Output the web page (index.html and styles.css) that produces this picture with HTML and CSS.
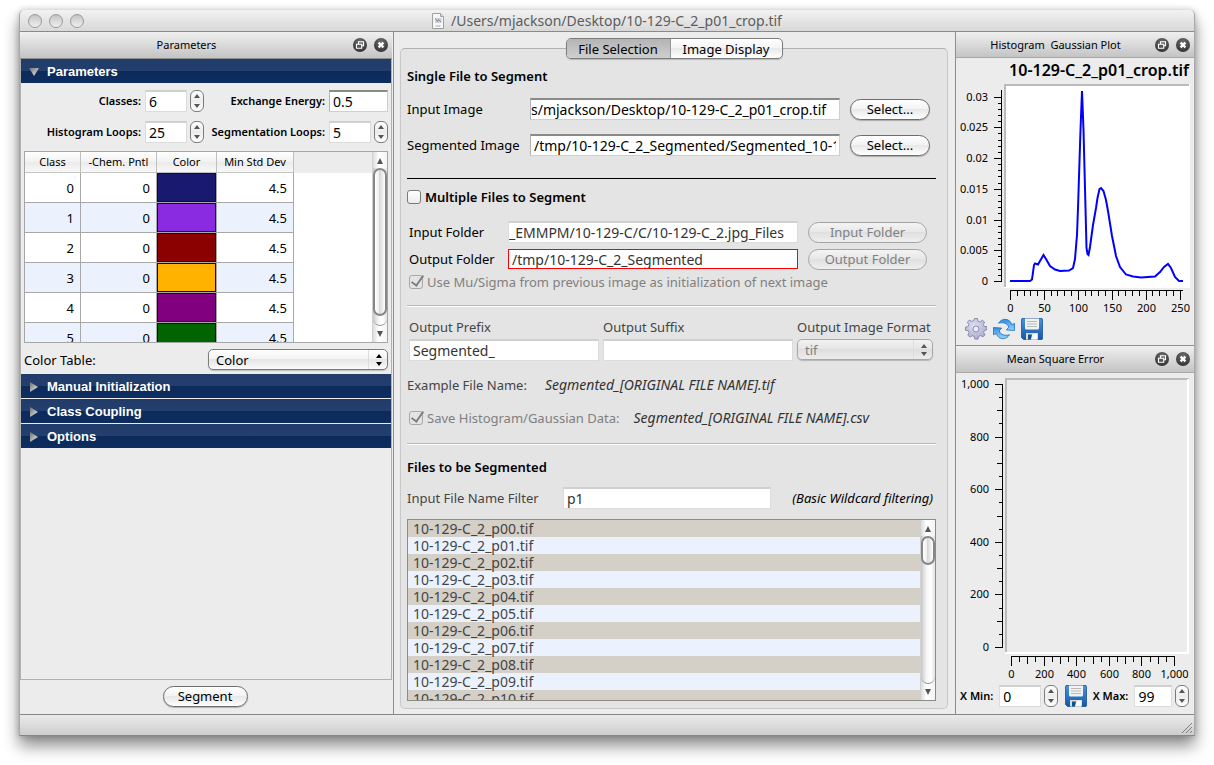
FILE: index.html
```html
<!DOCTYPE html>
<html lang="en">
<head>
<meta charset="utf-8">
<title>/Users/mjackson/Desktop/10-129-C_2_p01_crop.tif</title>
<link rel="stylesheet" href="styles.css">
</head>
<body>
<svg class="defs" width="0" height="0" aria-hidden="true">
  <defs>
    <radialGradient id="dark" cx="50%" cy="30%" r="75%"><stop offset="0" stop-color="#707070"/><stop offset="1" stop-color="#2e2e2e"/></radialGradient>
    <linearGradient id="arrow" x1="0" y1="0" x2="1" y2="1"><stop offset="0" stop-color="#6d6d6d"/><stop offset="1" stop-color="#f2f2f2"/></linearGradient>
    <linearGradient id="disk" x1="0" y1="0" x2="0" y2="1"><stop offset="0" stop-color="#4c94dc"/><stop offset="1" stop-color="#1257a8"/></linearGradient>
    <linearGradient id="sync" x1="0" y1="0" x2="0" y2="1"><stop offset="0" stop-color="#2f8ee4"/><stop offset="1" stop-color="#9ad4ff"/></linearGradient>
    <radialGradient id="cog" cx="40%" cy="35%" r="70%"><stop offset="0" stop-color="#dedff2"/><stop offset="1" stop-color="#a9abd0"/></radialGradient>
    <symbol id="i-float" viewBox="0 0 14 14"><circle cx="7" cy="7" r="7" fill="url(#dark)"/><path d="M5.5 6V3.8h5v4H9M3.5 6.2h5.2v4H3.5z" fill="none" stroke="#fff" stroke-width="1.1"/></symbol>
    <symbol id="i-close" viewBox="0 0 14 14"><circle cx="7" cy="7" r="7" fill="url(#dark)"/><path d="M4.6 4.6l4.8 4.8M9.4 4.6L4.6 9.4" stroke="#fff" stroke-width="2.3"/></symbol>
    <symbol id="i-disk" viewBox="0 0 22 22">
      <path d="M1 .5h20l.5.5v20l-.5.5H2.5L.5 19.500V1z" fill="url(#disk)" stroke="#17559c" stroke-width=".8"/>
      <path d="M4 .5h14v9.500q0 1.500-1.500 1.500h-11Q4 11.500 4 10z" fill="#f2f2f2"/>
      <path d="M6 3.500h10M6 6h10M6 8.500h10" stroke="#b9b9b9"/>
      <path d="M5 15h12v6.500H5z" fill="#dcdcd4"/><path d="M7 16.500h4l-1 5H7z" fill="#12508f"/><path d="M12 16l4-.5v6h-6z" fill="#fafafa"/>
    </symbol>
  </defs>
</svg>

<div class="window">
  <header class="titlebar">
    <div class="lights"><button aria-label="Close window"></button><button aria-label="Minimize"></button><button aria-label="Zoom"></button></div>
    <h1 class="title">
      <svg width="12" height="16" viewBox="0 0 12 16" aria-hidden="true"><path d="M.5.5h8l3 3v12H.5z" fill="#f6f6f6" stroke="#a0a0a0"/><path d="M8.500.5v3h3" fill="#ddd" stroke="#a0a0a0"/><path d="M3 5h6.500v5H3z" fill="#cdd2da"/><path d="M3.500 5.500l2 3 1-2 2.500 2.500" stroke="#7f8896" fill="none"/><path d="M3.500 13h5" stroke="#aaa"/></svg>
      /Users/mjackson/Desktop/10-129-C_2_p01_crop.tif
    </h1>
  </header>

  <main class="content">
    <aside class="dock dock-left">
      <div class="dock-head"><h2>Parameters</h2>
        <div class="dock-tools"><button aria-label="Float Parameters"><svg><use href="#i-float"/></svg></button><button aria-label="Close Parameters"><svg><use href="#i-close"/></svg></button></div>
      </div>
      <div class="toolbox">
        <button class="section" aria-expanded="true"><svg width="10" height="10"><path d="M0 1h10L5 9z" fill="url(#arrow)"/></svg>Parameters</button>
        <div class="params">
          <label for="classes">Classes:</label>
          <div class="spin"><input id="classes" class="field" value="6"><span class="stepper"><button aria-label="Increase"></button><button aria-label="Decrease"></button></span></div>
          <label for="energy">Exchange Energy:</label>
          <div class="spin"><input id="energy" class="field strong" value="0.5"></div>
          <label for="hloops">Histogram Loops:</label>
          <div class="spin"><input id="hloops" class="field" value="25"><span class="stepper"><button aria-label="Increase"></button><button aria-label="Decrease"></button></span></div>
          <label for="sloops">Segmentation Loops:</label>
          <div class="spin"><input id="sloops" class="field" value="5"><span class="stepper"><button aria-label="Increase"></button><button aria-label="Decrease"></button></span></div>
        </div>
        <div class="table-view">
          <div class="table-clip">
            <table class="classes">
              <thead><tr><th class="c-class">Class</th><th class="c-chem">-Chem. Pntl</th><th class="c-color">Color</th><th class="c-dev">Min Std Dev</th></tr></thead>
              <tbody>
                <tr><td>0</td><td>0</td><td class="swatch navy"></td><td>4.5</td></tr>
                <tr><td>1</td><td>0</td><td class="swatch violet"></td><td>4.5</td></tr>
                <tr><td>2</td><td>0</td><td class="swatch maroon"></td><td>4.5</td></tr>
                <tr><td>3</td><td>0</td><td class="swatch amber"></td><td>4.5</td></tr>
                <tr><td>4</td><td>0</td><td class="swatch purple"></td><td>4.5</td></tr>
                <tr><td>5</td><td>0</td><td class="swatch green"></td><td>4.5</td></tr>
              </tbody>
            </table>
          </div>
          <div class="scrollbar"><span class="up"></span><div class="track"><div class="thumb tall"></div></div><span class="down"></span></div>
        </div>
        <div class="color-row"><label for="ctable">Color Table:</label>
          <div class="popup"><select id="ctable"><option>Color</option></select><span class="chevrons"></span></div>
        </div>
        <button class="section"><svg width="10" height="10"><path d="M1 0v10l8-5z" fill="url(#arrow)"/></svg>Manual Initialization</button>
        <button class="section"><svg width="10" height="10"><path d="M1 0v10l8-5z" fill="url(#arrow)"/></svg>Class Coupling</button>
        <button class="section"><svg width="10" height="10"><path d="M1 0v10l8-5z" fill="url(#arrow)"/></svg>Options</button>
      </div>
      <div class="dock-foot"><button class="pill segment">Segment</button></div>
    </aside>

    <section class="center">
      <div class="tabs" role="tablist"><button role="tab" aria-selected="true">File Selection</button><button role="tab" aria-selected="false">Image Display</button></div>
      <div class="pane">
        <h3>Single File to Segment</h3>
        <div class="file-row first"><label for="inimg">Input Image</label><input id="inimg" class="field strong scrolled" value="s/mjackson/Desktop/10-129-C_2_p01_crop.tif"><button class="pill">Select...</button></div>
        <div class="file-row"><label for="segimg">Segmented Image</label><input id="segimg" class="field strong" value="/tmp/10-129-C_2_Segmented/Segmented_10-129-C_2_p01_crop.tif"><button class="pill">Select...</button></div>
        <hr class="rule black">
        <label class="check bold"><input type="checkbox"><span>Multiple Files to Segment</span></label>
        <div class="folder-row"><label for="infold">Input Folder</label><input id="infold" class="field grey scrolled" value="_EMMPM/10-129-C/C/10-129-C_2.jpg_Files"><button class="pill" disabled>Input Folder</button></div>
        <div class="folder-row tight"><label for="outfold">Output Folder</label><input id="outfold" class="field grey invalid" value="/tmp/10-129-C_2_Segmented"><button class="pill" disabled>Output Folder</button></div>
        <label class="check sigma"><input type="checkbox" checked disabled><span>Use Mu/Sigma from previous image as initialization of next image</span></label>
        <hr class="rule">
        <div class="output">
          <div><label for="prefix">Output Prefix</label><input id="prefix" class="field grey" value="Segmented_"></div>
          <div><label for="suffix">Output Suffix</label><input id="suffix" class="field grey"></div>
          <div><label for="format">Output Image Format</label><div class="popup off"><select id="format" disabled><option>tif</option></select><span class="chevrons"></span></div></div>
        </div>
        <p class="example"><span>Example File Name:</span><em>Segmented_[ORIGINAL FILE NAME].tif</em></p>
        <div class="save"><label class="check"><input type="checkbox" checked disabled><span>Save Histogram/Gaussian Data:</span></label><em>Segmented_[ORIGINAL FILE NAME].csv</em></div>
        <hr class="rule">
        <h3 class="files-head">Files to be Segmented</h3>
        <div class="filter-row"><label for="filter">Input File Name Filter</label><input id="filter" class="field grey" value="p1"><em>(Basic Wildcard filtering)</em></div>
        <div class="list-view">
          <ul>
            <li>10-129-C_2_p00.tif</li><li>10-129-C_2_p01.tif</li><li>10-129-C_2_p02.tif</li><li>10-129-C_2_p03.tif</li>
            <li>10-129-C_2_p04.tif</li><li>10-129-C_2_p05.tif</li><li>10-129-C_2_p06.tif</li><li>10-129-C_2_p07.tif</li>
            <li>10-129-C_2_p08.tif</li><li>10-129-C_2_p09.tif</li><li>10-129-C_2_p10.tif</li>
          </ul>
          <div class="scrollbar"><span class="up"></span><div class="track"><div class="thumb short"></div></div><span class="down"></span></div>
        </div>
      </div>
    </section>

    <aside class="dock dock-right">
      <div class="dock-head"><h2>Histogram&nbsp; Gaussian Plot</h2>
        <div class="dock-tools"><button aria-label="Float histogram"><svg><use href="#i-float"/></svg></button><button aria-label="Close histogram"><svg><use href="#i-close"/></svg></button></div>
      </div>
      <svg class="chart" id="histogram" viewBox="0 0 238 258" height="258" role="img" aria-label="Histogram">
        <text class="chart-title" x="233" y="18" text-anchor="end">10-129-C_2_p01_crop.tif</text>
        <path d="M48 26h186v204H48z" fill="#fff"/><path d="M49 229V27h184" fill="none" stroke="#bbb" stroke-width="2"/>
        <g class="axes"></g>
        <path class="curve" d="M54 223H74L76 221.500 78 207 79 205.500 82 206.500 84 203 87.500 197 90 201 94 208 99 211.500 104 213 113 212.500 117 210 119 201 121 177 122 150 124.500 72 126 33 127.500 72 129.500 150 130.500 190 131.500 196 132.500 197 134 189 137 167 140 150 141.500 140 143.500 131 145 130 147.500 133 150 142 152 153 156 178 160 198 164 209 170 216.500 177 218.500 185 219.500 199 218.500 204 214 208 209 212 206 215 210 219 219 223 223H227"/>
      </svg>
      <div class="icons">
        <button aria-label="Settings"><svg width="22" height="22" viewBox="-11 -11 22 22"><g fill="url(#cog)" stroke="#7678a8" stroke-width=".8" stroke-linejoin="round"><path d="M-1.500-10.500h3l.6 2.700 2 .8 2.200-1.800 2.300 2-1.300 2.400 1 1.800 2.700.3v3l-2.600.8-.8 1.900 1.500 2.300-2.200 2.200-2.300-1.300-2 .9-.6 2.600h-3l-.8-2.600-1.900-.8-2.300 1.400-2.200-2 1.300-2.400-.9-2-2.700-.5v-3l2.700-.7.7-2-1.500-2.200 2-2.200 2.400 1.300 2-.9z"/><circle r="3" fill="#ececec"/></g></svg></button>
        <button aria-label="Refresh"><svg width="22" height="22" viewBox="0 0 22 22"><g fill="url(#sync)" stroke="#1c6dbb" stroke-width=".8" stroke-linejoin="round"><path d="M5.500 5.200C9-.5 17 .2 18.600 6.500l2.900-1V12.500l-8.200-.6 2.500-2.700C14.500 5 10 4 5.500 5.200z"/><path d="M16.500 16.800C13 22.500 5 21.800 3.400 15.500L.5 16.700V9.500l8.200.6-2.500 2.700C7.500 17 12 18 16.500 16.800z"/></g></svg></button>
        <button aria-label="Save histogram"><svg width="22" height="22"><use href="#i-disk"/></svg></button>
      </div>
      <div class="dock-head second"><h2>Mean Square Error</h2>
        <div class="dock-tools"><button aria-label="Float error plot"><svg><use href="#i-float"/></svg></button><button aria-label="Close error plot"><svg><use href="#i-close"/></svg></button></div>
      </div>
      <svg class="chart" id="mse" viewBox="0 0 238 310" height="310" role="img" aria-label="Mean Square Error">
        <path d="M50 280V6h183" fill="none" stroke="#bbb" stroke-width="2"/><path d="M49 280H232V6" fill="none" stroke="#fff" stroke-width="2"/>
        <g class="axes"></g>
      </svg>
      <div class="range">
        <label for="xmin">X Min:</label><input id="xmin" class="field" value="0"><span class="stepper"><button aria-label="Increase"></button><button aria-label="Decrease"></button></span>
        <button class="save-btn" aria-label="Save error plot"><svg width="22" height="22"><use href="#i-disk"/></svg></button>
        <label for="xmax">X Max:</label><input id="xmax" class="field" value="99"><span class="stepper"><button aria-label="Increase"></button><button aria-label="Decrease"></button></span>
      </div>
    </aside>
  </main>

  <footer class="statusbar"><svg width="12" height="12" viewBox="0 0 12 12" aria-hidden="true"><path d="M1 11L11 1M5 11l6-6M9 11l2-2" stroke="#7d7d7d"/></svg></footer>
</div>
<script src="charts.js"></script>
</body>
</html>
```
FILE: styles.css
```css
* { box-sizing: border-box; }
body {
  margin: 0;
  min-height: 100vh;
  padding: 10px 19px 29px;
  display: flex;
  background: #fff;
  color: #000;
  font: 13px/18px "Noto Sans", "Open Sans", sans-serif;
}
h1, h2, h3, p, ul { margin: 0; padding: 0; }
button, input, select { font: inherit; color: inherit; margin: 0; }
button { padding: 0; border: 0; background: none; }
svg { display: block; }
.defs { position: absolute; }

.window {
  flex: 1;
  display: flex;
  flex-direction: column;
  border: 1px solid #a8a8a8;
  border-top: 0;
  border-bottom-color: #868686;
  border-radius: 5px 5px 0 0;
  background: #ececec;
  box-shadow: 0 10px 16px rgba(0, 0, 0, .45), 0 0 6px rgba(0, 0, 0, .2);
}
.titlebar {
  height: 22px;
  display: grid;
  grid-template-columns: 1fr auto 1fr;
  align-items: center;
  border-bottom: 1px solid #8a8a8a;
  border-radius: 5px 5px 0 0;
  background: linear-gradient(#f2f2f2, #d8d8d8);
}
.lights { display: flex; gap: 7px; padding-left: 8px; }
.lights button {
  width: 14px;
  height: 14px;
  border: 1px solid #999;
  border-radius: 50%;
  background: linear-gradient(#c4c4c4, #f0f0f0);
}
.title { display: flex; align-items: center; gap: 7px; font-size: 14px; font-weight: 400; color: #5c5c5c; }

.content { flex: 1; display: grid; grid-template-columns: 374px 1fr 239px; }
.dock { display: flex; flex-direction: column; min-width: 0; }
.dock-left { border-right: 1px solid #8e8e8e; padding-right: 1px; }
.dock-right { border-left: 1px solid #8e8e8e; }
.dock-head {
  flex: none;
  height: 27px;
  display: flex;
  align-items: center;
  padding-right: 4px;
  border-bottom: 1px solid #8e8e8e;
  background: linear-gradient(#f0f0f0, #c4c4c4);
}
.dock-head h2 { flex: 1; text-align: center; font-size: 11px; font-weight: 400; }
.dock-right .dock-head { height: 26px; border-bottom-color: #a8a8a8; }
.dock-right .dock-head.second { height: 28px; border-top: 1px solid #8e8e8e; }
.dock-tools { display: flex; gap: 7px; }
.dock-tools svg { width: 14px; height: 14px; }

.toolbox { flex: 1; border: 1px solid #b0b0b0; border-top: 0; display: flex; flex-direction: column; }
.section {
  height: 24px;
  flex: none;
  display: flex;
  align-items: center;
  gap: 8px;
  padding: 1px 0 0 8px;
  margin-bottom: 1px;
  background: linear-gradient(#213c68 0, #233f6e 50%, #0c2a5a 50%, #0e2d60 100%);
  color: #fff;
  font: bold 13px/18px "Liberation Sans", sans-serif;
}
.params {
  display: grid;
  grid-template-columns: 117px 59px 1fr 59px;
  gap: 7px 4px;
  align-items: center;
  padding: 5px 3px 7px;
}
.params label, .range label { font-size: 11px; font-weight: 600; text-align: right; white-space: nowrap; }
.spin { display: flex; gap: 3px; height: 24px; align-items: center; }
.spin .field { flex: 1; }
.field {
  min-width: 0;
  height: 22px;
  padding: 0 3px;
  border: 1px solid #dcdcdc;
  border-top: 2px solid #d0d0d0;
  border-radius: 0;
  background: #fff;
  font-size: 14px;
  outline: 0;
}
.field.strong { border-color: #8a8a8a #cfcfcf #cfcfcf #b4b4b4; }
.field.grey { color: #333; }
.field.scrolled { padding-left: 0; }
.field.invalid { height: 20px; border: 1px solid #f00; }
.stepper {
  flex: none;
  width: 14px;
  height: 22px;
  display: flex;
  flex-direction: column;
  justify-content: space-between;
  align-items: center;
  padding: 3px 0;
  border: 1px solid #7c7c7c;
  border-radius: 6px;
  background: linear-gradient(#fff, #ececec 50%, #fff);
}
.stepper button, .up, .down, .chevrons::before, .chevrons::after { width: 0; height: 0; border: solid transparent; border-width: 0 3px 4px; border-bottom-color: #555; }
.stepper button:last-child, .down, .chevrons::after { border-width: 4px 3px 0; border-top-color: #555; }

.table-view {
  height: 192px;
  flex: none;
  display: flex;
  justify-content: space-between;
  margin: 0 3px;
  border: 1px solid #a6a6a6;
  background: linear-gradient(#ececec 21px, #fff 21px);
}
.table-clip { overflow: hidden; }
.classes { border-collapse: separate; border-spacing: 0; table-layout: fixed; width: 269px; }
.classes th {
  height: 21px;
  padding: 0;
  border-right: 1px solid #c0c0c0;
  border-bottom: 1px solid #c4c4c4;
  background: linear-gradient(#fff, #f2f2f2 50%, #ebebeb 50%, #f8f8f8);
  font-size: 11px;
  font-weight: 400;
  white-space: nowrap;
}
.c-class { width: 56px; }
.c-chem { width: 76px; }
.c-color { width: 60px; }
.c-dev { width: 77px; }
.classes td {
  height: 30px;
  padding: 0 6px 0 0;
  border-right: 1px solid #a8a8a8;
  border-bottom: 1px solid #a8a8a8;
  background: #fff;
  text-align: right;
}
.classes tr:nth-child(even) td, .classes tr:last-child td { background-color: #ebf2fe; }
.classes .swatch { box-shadow: inset 0 0 0 1px #111; }
.classes tr .swatch.navy { background-color: #191970; }
.classes tr .swatch.violet { background-color: #8a2be2; }
.classes tr .swatch.maroon { background-color: #8b0000; }
.classes tr .swatch.amber { background-color: #ffb300; }
.classes tr .swatch.purple { background-color: #800080; }
.classes tr .swatch.green { background-color: #006400; }

.scrollbar {
  flex: none;
  width: 15px;
  display: flex;
  flex-direction: column;
  align-items: center;
  padding: 6px 0 5px;
  border-left: 1px solid #d0d0d0;
  background: linear-gradient(90deg, #dcdcdc, #fff 40%, #f4f4f4);
}
.up { border-width: 0 3px 6px; }
.down { border-width: 6px 3px 0; }
.track {
  flex: 1;
  width: 14px;
  margin: 4px 0 5px;
  border-bottom: 1px solid #999;
  border-radius: 0 0 7px 7px;
  background: linear-gradient(90deg, #c8c8c8, #f6f6f6 40%, #fff 70%, #e2e2e2);
}
.thumb {
  border: 2px solid #868686;
  border-radius: 7px;
  background: linear-gradient(90deg, #fff, #eee 40%, #d8d8d8 45%, #fff);
}
.thumb.tall { height: 94%; }
.thumb.short { height: 29px; }

.color-row { flex: none; height: 31px; display: flex; justify-content: space-between; align-items: center; padding: 2px 3px 0; }
.color-row .popup { width: 180px; }
.popup { display: flex; align-items: center; position: relative; height: 21px; }
.popup select {
  appearance: none;
  width: 100%;
  height: 21px;
  padding: 0 24px 0 7px;
  border: 1px solid #7c7c7c;
  border-radius: 5px;
  background: linear-gradient(#fff, #f4f4f4 45%, #e6e6e6 50%, #fafafa);
  box-shadow: 0 1px 1px rgba(0, 0, 0, .2);
  opacity: 1;
}
.chevrons { position: absolute; right: 0; top: 1px; bottom: 1px; width: 20px; display: flex; flex-direction: column; align-items: center; justify-content: center; gap: 4px; border-left: 1px solid #ddd; pointer-events: none; }
.chevrons::before, .chevrons::after { content: ""; }
.color-row .chevrons::before { border-bottom-color: #000; }
.color-row .chevrons::after { border-top-color: #000; }
.popup.off select { color: #808080; border-color: #a8a8a8; background: linear-gradient(#f2f2f2, #e6e6e6 45%, #dedede 50%, #ececec); }

.dock-foot { flex: none; height: 34px; display: flex; justify-content: center; align-items: center; padding: 0 2px 2px 0; }
.pill {
  height: 21px;
  border: 1px solid #6c6c6c;
  border-radius: 11px;
  background: linear-gradient(#fff, #f4f4f4 45%, #e8e8e8 50%, #fff);
  box-shadow: 0 1px 1px rgba(0, 0, 0, .25);
  text-align: center;
}
.pill:disabled { color: #808080; border-color: #a4a4a4; background: linear-gradient(#f4f4f4, #e8e8e8 45%, #e0e0e0 50%, #efefef); box-shadow: none; }
.segment { width: 85px; }

.center { display: flex; flex-direction: column; padding: 6px 7px 5px 6px; min-width: 0; }
.tabs { align-self: center; position: relative; display: flex; height: 21px; border: 1px solid #7c7c7c; border-radius: 5px; background: linear-gradient(#fff, #f4f4f4 45%, #e9e9e9 50%, #fff); box-shadow: 0 1px 1px rgba(0, 0, 0, .2); }
.tabs button { width: 111px; }
.tabs button:first-child { width: 104px; border-right: 1px solid #999; border-radius: 4px 0 0 4px; background: linear-gradient(#b4b4b4, #cfcfcf); }
.pane {
  flex: 1;
  display: flex;
  flex-direction: column;
  margin-top: -11px;
  padding: 18px 11px 7px 6px;
  border: 1px solid #c8c8c8;
  border-top-color: #b0b0b0;
  border-radius: 5px;
  background: #e4e4e4;
}
h3 { font-size: 13px; line-height: 18px; font-weight: 600; }
.file-row { display: grid; grid-template-columns: 123px 1fr 80px; height: 22px; align-items: center; margin-top: 14px; padding-right: 6px; }
.file-row.first { margin-top: 13px; }
.file-row .field { margin-right: 10px; }
.rule { width: 100%; margin: 0; border: 0; border-top: 1px solid #b8b8b8; border-bottom: 1px solid #fff; }
.rule.black { margin-top: 22px; border-top-color: #000; border-bottom: 0; }
.check { display: flex; align-items: center; gap: 4px; height: 18px; }
.check.bold { margin-top: 9px; font-weight: 600; }
.check input {
  appearance: none;
  width: 14px;
  height: 14px;
  display: grid;
  place-items: center;
  border: 1px solid #7a7a7a;
  border-radius: 3px;
  background: linear-gradient(#fff, #ececec);
}
.check input:disabled { margin-left: 2px; border-color: #a8a8a8; background: #e4e4e4; }
.check input:disabled + span { color: #808080; }
.check input:checked::before { content: ""; width: 5px; height: 11px; margin: -5px 0 0 2px; border: solid #808080; border-width: 0 2px 2px 0; transform: rotate(35deg); }
.folder-row { display: grid; grid-template-columns: 99px 1fr 119px; height: 22px; align-items: center; margin-top: 15px; padding: 0 9px 0 2px; }
.folder-row .field { margin-right: 10px; }
.folder-row.tight { margin-top: 5px; }
.sigma { margin: 3px 0 14px; }
.output { display: grid; grid-template-columns: 1fr 1fr 136px; gap: 4px; margin-top: 10px; padding: 0 3px 0 2px; color: #444; }
.output label { display: block; height: 22px; line-height: 20px; white-space: nowrap; }
.output .field { display: block; width: 100%; }
.example { display: flex; gap: 18px; margin-top: 15px; color: #444; }
em { color: #333; font-size: 14px; }
.save { display: flex; align-items: center; gap: 14px; margin: 15px 0 16px; }
.files-head { margin-top: 13px; }
.filter-row { display: grid; grid-template-columns: 156px 208px 1fr; height: 22px; align-items: center; margin-top: 11px; color: #444; }
.filter-row em { padding-right: 3px; color: #000; font-size: 13px; text-align: right; white-space: nowrap; }
.list-view { flex: 1 1 0; min-height: 0; display: flex; margin-top: 10px; border: 1px solid #8e8a84; overflow: hidden; }
.list-view ul { flex: 1; height: 181px; list-style: none; }
.list-view li { height: 17px; padding-left: 5px; background: #d4cfc7; color: #444; font-size: 14px; line-height: 17px; }
.list-view li:nth-child(even) { background: #ebf2fe; }

.chart { flex: none; width: 100%; }
.chart text { font-size: 11px; }
.chart .chart-title { font-size: 16px; font-weight: 600; }
.axes path { fill: none; stroke: #000; shape-rendering: crispEdges; }
.curve { fill: none; stroke: #00f; stroke-width: 2; }
.icons { flex: 1; display: flex; align-items: flex-start; gap: 6px; padding: 2px 0 0 9px; }
.range { flex: none; height: 31px; display: flex; align-items: flex-start; padding: 2px 5px 0 4px; }
.range label { line-height: 22px; }
.range .field { width: 43px; margin: 0 3px 0 6px; }
.range .save-btn { margin: 0 6px 0 7px; }
.range #xmax { width: 39px; }
.statusbar {
  height: 21px;
  display: flex;
  justify-content: flex-end;
  align-items: flex-end;
  padding: 0 1px 1px 0;
  border-top: 1px solid #868686;
  background: linear-gradient(#ebebeb, #cdcdcd);
}
```
FILE: charts.js
```js
const SVG = "http://www.w3.org/2000/svg";

function label(group, x, y, anchor, text) {
  const t = document.createElementNS(SVG, "text");
  t.setAttribute("x", x);
  t.setAttribute("y", y);
  t.setAttribute("text-anchor", anchor);
  t.textContent = text;
  group.append(t);
}

// Draws a pair of rulers; "steps" minor intervals lie between two labels.
function axes(id, v, h) {
  const group = document.querySelector("#" + id + " .axes");
  let d = `M${v.x} ${v.top}V${v.zero}M${h.zero} ${h.y}H${h.end}`;
  const length = (i, a) => (i % a.steps === 0 ? a.major : a.middle && i % 2 === 0 ? a.middle : a.minor);
  for (let i = 0; i <= (v.labels.length - 1) * v.steps; i++) {
    const y = Math.round(v.zero - i * v.gap) + 0.5;
    d += `M${v.x} ${y}h${-length(i, v)}`;
    if (i % v.steps === 0) label(group, v.textX, y + 3.5, "end", v.labels[i / v.steps]);
  }
  for (let i = 0; i <= (h.labels.length - 1) * h.steps; i++) {
    const x = Math.round(h.zero + i * h.gap) + 0.5;
    d += `M${x} ${h.y}v${length(i, h)}`;
    if (i % h.steps === 0) label(group, x, h.y + 21.5, "middle", h.labels[i / h.steps]);
  }
  const path = document.createElementNS(SVG, "path");
  path.setAttribute("d", d);
  group.append(path);
}

axes("histogram",
  { x: 45.5, top: 32, zero: 223, gap: 6.15, steps: 5, major: 8, minor: 4, textX: 32, labels: ["0", "0.005", "0.01", "0.015", "0.02", "0.025", "0.03"] },
  { y: 232.5, zero: 54, end: 227, gap: 6.78, steps: 5, major: 9, minor: 5, labels: ["0", "50", "100", "150", "200", "250"] });
axes("mse",
  { x: 46.5, top: 11, zero: 274, gap: 13.15, steps: 4, major: 8, middle: 6, minor: 4, textX: 33, labels: ["0", "200", "400", "600", "800", "1,000"] },
  { y: 283.5, zero: 55, end: 219, gap: 8.15, steps: 4, major: 9, middle: 7, minor: 5, labels: ["0", "200", "400", "600", "800", "1,000"] });
```
